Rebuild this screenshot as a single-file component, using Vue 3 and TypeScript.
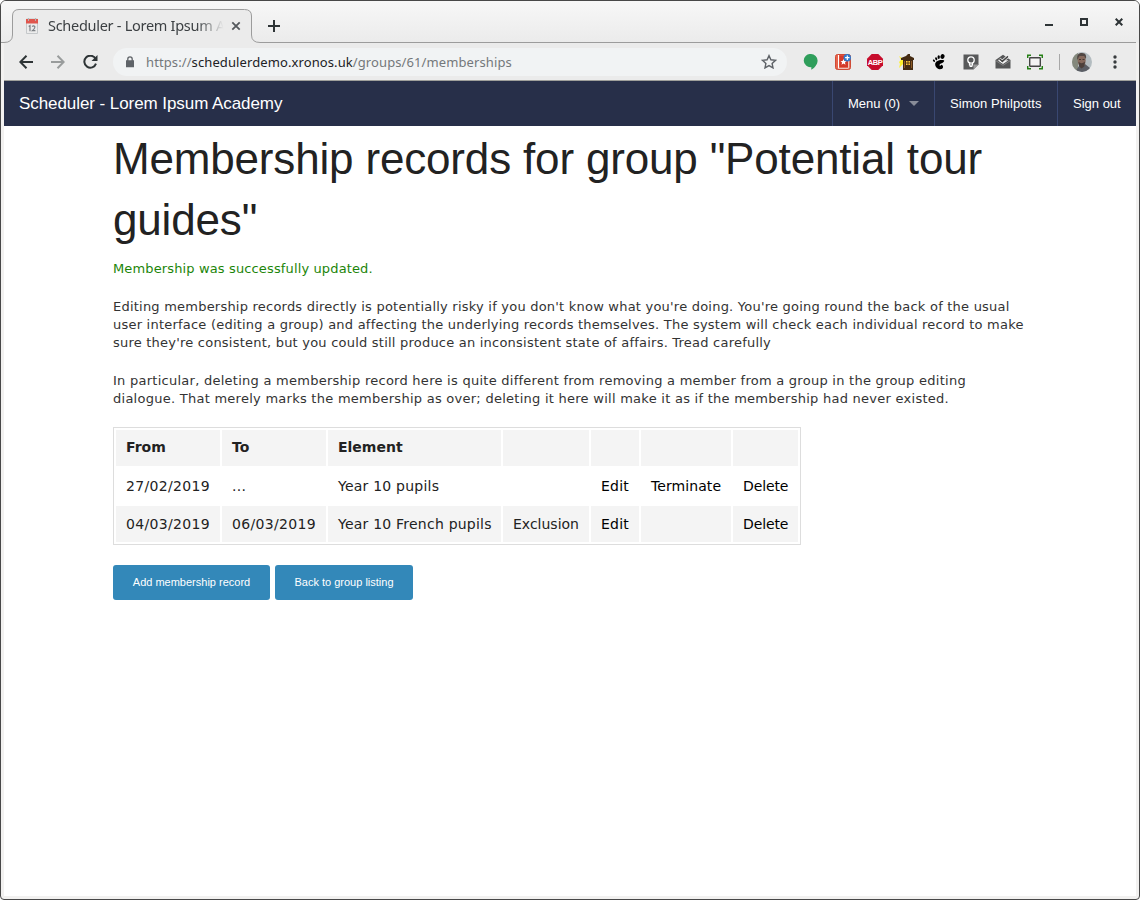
<script setup lang="ts">
interface MembershipRow {
  from: string
  to: string
  element: string
  kind: string
  terminable: boolean
}

const rows: MembershipRow[] = [
  { from: '27/02/2019', to: '...', element: 'Year 10 pupils', kind: '', terminable: true },
  { from: '04/03/2019', to: '06/03/2019', element: 'Year 10 French pupils', kind: 'Exclusion', terminable: false },
]
</script>

<template>
  <div class="window">
    <header class="tabstrip">
      <svg class="tab-shape" width="1138" height="42" viewBox="1 1 1138 42">
        <path d="M1 42.5H4Q12.500 42.500 12.500 35V16Q12.500 9.500 19 9.500H244.500Q251.500 9.500 251.500 16V35Q251.500 42.500 260 42.500H1139V44H1Z" fill="#ebebeb" />
        <path d="M260 42.500H1139V1H1V42.500H4Q12.500 42.500 12.500 35V16Q12.500 9.500 19 9.500H244.500Q251.500 9.500 251.500 16V35Q251.500 42.500 260 42.500Z" fill="url(#strip)" stroke="none" />
        <path d="M1 42.500H4Q12.500 42.500 12.500 35V16Q12.500 9.500 19 9.500H244.500Q251.500 9.500 251.500 16V35Q251.500 42.500 260 42.500H1136" fill="none" stroke="#9c9c9c" />
        <defs>
          <linearGradient id="strip" x1="0" y1="0" x2="0" y2="1"><stop stop-color="#f7f7f7" /><stop offset="1" stop-color="#ebebeb" /></linearGradient>
        </defs>
      </svg>
      <div class="tab">
        <svg class="favicon" width="12" height="16" viewBox="0 0 12 16">
          <path d="M.5 1h11v14.500H.5z" fill="#ececec" stroke="#c5c8ca" />
          <path d="M0 1h12v4.500H0z" fill="#e0564d" />
          <path d="M2.500 0v3M9.500 0v3" stroke="#b5b5b5" />
          <path d="M2.700 8.500l1.300-.9V13.200M6.200 8.700q1.200-1.600 2.500-.3 .8 1.500-2.300 4.300h3" fill="none" stroke="#7d8185" stroke-width="1.200" />
        </svg>
        <span class="tab-title">Scheduler - Lorem Ipsum A</span>
        <svg class="tab-close" width="10" height="10" viewBox="0 0 10 10"><path d="M1.300 1.300l7.400 7.400M8.700 1.300L1.300 8.700" stroke="#54585c" stroke-width="1.800" /></svg>
      </div>
      <svg class="new-tab" width="12" height="12" viewBox="0 0 12 12"><path d="M6 0v12M0 6h12" stroke="#2e3436" stroke-width="2" /></svg>
      <div class="controls">
        <svg width="8" height="8" viewBox="0 0 8 8"><path d="M0 7h8" stroke="#2e3436" stroke-width="2" /></svg>
        <svg width="8" height="8" viewBox="0 0 8 8"><path d="M1 1h6v6H1z" fill="none" stroke="#2e3436" stroke-width="2" /></svg>
        <svg width="8" height="8" viewBox="0 0 8 8"><path d="M.7.7l6.600 6.600M7.300.7L.7 7.300" stroke="#2e3436" stroke-width="2" /></svg>
      </div>
    </header>

    <div class="toolbar">
      <svg class="nav" width="14" height="14" viewBox="0 0 14 14"><path d="M14 7H1.500M7.500.8L1.300 7l6.200 6.200" fill="none" stroke="#2e3436" stroke-width="2" /></svg>
      <svg class="nav" width="14" height="14" viewBox="0 0 14 14"><path d="M0 7h12.500M6.500.8L12.700 7l-6.200 6.200" fill="none" stroke="#999c9c" stroke-width="2" /></svg>
      <svg class="nav reload" width="15" height="14" viewBox="0 0 15 14"><path d="M12.600 3.800A6 6 0 1 0 13 8.700" fill="none" stroke="#2e3436" stroke-width="2" /><path d="M14.500 0v6H8.500z" fill="#2e3436" /></svg>
      <div class="omnibox">
        <svg width="8" height="12" viewBox="0 0 8 12"><path d="M0 4.300h8v7H0z" fill="#5f6368" /><path d="M1.800 5V3.100a2.200 2.200 0 0 1 4.400 0V5" fill="none" stroke="#5f6368" stroke-width="1.300" /></svg>
        <span class="url">https://<b>schedulerdemo.xronos.uk</b>/groups/61/memberships</span>
        <svg class="star" width="16" height="15" viewBox="0 0 16 15"><path d="M8 1.600l1.900 4.200 4.600.5-3.400 3.100.9 4.500-4-2.300-4 2.300.9-4.500L1.500 6.300l4.600-.5z" fill="none" stroke="#5f6368" stroke-width="1.400" /></svg>
      </div>
      <div class="extensions">
        <svg viewBox="0 0 16 16"><path d="M8 0a6.600 6.600 0 0 1 6.600 6.500c0 4-3.300 7.700-6.300 9.200v-2.600A6.600 6.600 0 1 1 8 0z" fill="#2f9e5b" /></svg>
        <svg viewBox="0 0 16 16"><rect x=".5" y=".5" width="15" height="15" rx="2" fill="#e8644c" stroke="#cf4b36" /><path d="M3.500 1v13" stroke="#fff" stroke-width="1" /><rect x="4.500" y="1.500" width="8.500" height="12" fill="#d43a2a" /><path d="M3 14.300h10.500M13.700 7v7" stroke="#f3d9d3" /><path d="M8.500 5l.9 2 2.200.2-1.700 1.400.6 2.200-2-1.200-2 1.200.6-2.200L5.400 7.200 7.600 7z" fill="#fff" /><circle cx="12.300" cy="3.700" r="3.700" fill="#3179cc" /><path d="M12.300 1.500v4.400M10.100 3.700h4.400" stroke="#fff" stroke-width="1.200" /></svg>
        <svg class="abp-icon" viewBox="0 0 16 16"><path d="M4.700 0h6.600L16 4.700v6.600L11.300 16H4.700L0 11.300V4.700z" fill="#c70d2c" /><text x="8" y="10.900" text-anchor="middle" class="abp">ABP</text></svg>
        <svg viewBox="0 0 16 16"><path d="M0 2l7 5-7 7 1-4-1-2 2-2z" fill="#fff02c" /><path d="M9 0h2v2l4 2v2H2V4l5-2zM4 6h10v10H4z" fill="#452c13" /><path d="M5 7h1v7H5zM12 7h1v7h-1z" fill="#8c5a27" /><path d="M7 7h4v4H7z" fill="#ffc63a" /><path d="M9 7v4M7 9h4" stroke="#452c13" stroke-width=".8" /></svg>
        <svg viewBox="0 0 16 16"><ellipse cx="11.500" cy="2.500" rx="2" ry="2.500" transform="rotate(20 11.500 2.500)" /><ellipse cx="7.700" cy="3.100" rx="1.200" ry="1.900" /><ellipse cx="5.200" cy="4.700" rx="1" ry="1.600" transform="rotate(-20 5.200 4.700)" /><ellipse cx="3" cy="6.700" rx=".9" ry="1.400" transform="rotate(-35 3 6.700)" /><path d="M12.800 6.200c-4-.8-9 .8-8.600 4.500.3 3 3.500 5.100 6.200 4.400 2.200-.7 2-3.300.7-4.100-1.200-.7-1 .9-2 .8-1.200-.3-.5-1.800.9-2.300 1.700-.6 4.200-2.500 2.800-3.300z" /></svg>
        <svg viewBox="0 0 16 16"><path d="M.5 .5h15v10L10.500 15.500H.5z" fill="#58595a" /><path d="M15.500 10.500l-5 5v-5z" fill="#999" /><circle cx="8" cy="6" r="3.200" fill="none" stroke="#fff" stroke-width="1.300" /><path d="M6.500 8.500v2.700h3V8.500M6.600 12.500h2.800" fill="none" stroke="#fff" stroke-width="1.200" /></svg>
        <svg viewBox="0 0 16 16"><path d="M.5 6L8 .8 15.500 6v8.500H.5z" fill="#555657" /><path d="M2.500 6.300h11L8 10z" fill="#f1f1f1" /><path d="M4.500 4.700l2.800 2.700 5.700-5" fill="none" stroke="#fff" stroke-width="2.800" /><path d="M4.500 4.700l2.800 2.700 5.700-5" fill="none" stroke="#444" stroke-width="1.500" /><path d="M.5 6.500L8 11.300l7.500-4.800" fill="none" stroke="#999" stroke-width=".7" /></svg>
        <svg viewBox="0 0 16 16"><rect x="2.700" y="3.700" width="10.600" height="8.600" rx=".6" fill="#f4f4f4" stroke="#454545" stroke-width="1.400" /><path d="M.7 4V1.200H4M12 1.200h3.300V4M.7 12v2.800H4M12 14.800h3.300V12" fill="none" stroke="#258015" stroke-width="1.500" /></svg>
      </div>
      <span class="separator" />
      <svg class="avatar" width="20" height="20" viewBox="0 0 20 20">
        <defs><clipPath id="face"><circle cx="10" cy="10" r="10" /></clipPath></defs>
        <g clip-path="url(#face)"><path d="M0 0h20v20H0z" fill="#b3bcc0" /><path d="M0 0h6v20H0z" fill="#85897d" /><path d="M3 20l4-6 6-2 5 4v4z" fill="#5b5e65" /><ellipse cx="9.700" cy="8.500" rx="4" ry="6.200" fill="#86695c" /><path d="M5.300 8C4.500 2 7 1 10 1c4 0 4.500 3 4 6l-2-3H7.500z" fill="#514743" /><path d="M6.500 10q3.500 2.500 6.500-.5l-.7 5-2.800 2-2.300-2z" fill="#4d403b" /><path d="M7 7.500h2M10.500 7.500h2" stroke="#443730" /></g>
      </svg>
      <svg class="more" width="4" height="14" viewBox="0 0 4 14"><circle cx="2" cy="2" r="1.700" /><circle cx="2" cy="7" r="1.700" /><circle cx="2" cy="12" r="1.700" /></svg>
    </div>

    <div class="viewport">
      <nav class="topbar">
        <span class="brand">Scheduler - Lorem Ipsum Academy</span>
        <a class="menu">Menu (0)<i /></a>
        <a class="user">Simon Philpotts</a>
        <a class="signout">Sign out</a>
      </nav>
      <main>
        <h1>Membership records for group "Potential tour<br>guides"</h1>
        <p class="notice">Membership was successfully updated.</p>
        <p>Editing membership records directly is potentially risky if you don't know what you're doing. You're going round the back of the usual<br>user interface (editing a group) and affecting the underlying records themselves. The system will check each individual record to make<br>sure they're consistent, but you could still produce an inconsistent state of affairs. Tread carefully</p>
        <p class="caution">In particular, deleting a membership record here is quite different from removing a member from a group in the group editing<br>dialogue. That merely marks the membership as over; deleting it here will make it as if the membership had never existed.</p>
        <table>
          <colgroup><col class="c1"><col class="c2"><col class="c3"><col class="c4"><col class="c5"><col class="c6"><col class="c7"></colgroup>
          <thead>
            <tr><th>From</th><th>To</th><th>Element</th><th /><th /><th /><th /></tr>
          </thead>
          <tbody>
            <tr v-for="row in rows" :key="row.from">
              <td class="date">{{ row.from }}</td>
              <td class="date">{{ row.to }}</td>
              <td class="element">{{ row.element }}</td>
              <td>{{ row.kind }}</td>
              <td><a class="edit">Edit</a></td>
              <td><a v-if="row.terminable" class="terminate">Terminate</a></td>
              <td><a class="delete">Delete</a></td>
            </tr>
          </tbody>
        </table>
        <div class="actions">
          <button class="add">Add membership record</button>
          <button class="back">Back to group listing</button>
        </div>
      </main>
    </div>
  </div>
</template>

<style>
body { margin: 0; background: #fff; }
</style>

<style scoped>
* { box-sizing: border-box; }
svg { display: block; flex: none; }
.window { width: 1140px; height: 900px; border: 1px solid #484848; border-radius: 6px 6px 4px 4px; background: #f2f1f0; overflow: hidden; display: flex; flex-direction: column; }
.tabstrip { position: relative; height: 42px; flex: none; display: flex; }
.tab-shape { position: absolute; left: 0; top: 0; }
.tab { position: relative; margin-left: 11px; width: 240px; height: 33px; margin-top: 8px; display: flex; align-items: center; padding-left: 14px; }
.favicon { margin-top: 1px; }
.tab-title { margin: -2px 0 0 10px; width: 181px; flex: none; white-space: nowrap; font: 14.500px/22px "Noto Sans", sans-serif; letter-spacing: -0.28px; color: #3c4043; -webkit-mask-image: linear-gradient(90deg, #000 82%, transparent 97%); mask-image: linear-gradient(90deg, #000 82%, transparent 97%); }
.tab-close { margin-left: 2px; }
.new-tab { position: relative; margin: 19px 0 0 16px; }
.controls { position: relative; margin: 17px 11px 0 auto; display: flex; gap: 27px; padding-right: 5px; }
.toolbar { height: 38px; flex: none; margin-right: 3px; margin-left: 3px; background: #ebebeb; border-bottom: 1px solid #9fa09b; display: flex; align-items: center; padding: 0 19px 0 15px; }
.nav { margin-right: 18px; }
.omnibox { height: 28px; width: 674px; margin-left: -3px; border-radius: 14px; background: #f1f3f4; display: flex; align-items: center; padding: 0 10px 0 13px; }
.url { margin-left: 12px; font: 13px/20px "Noto Sans", sans-serif; letter-spacing: 0.100px; color: #74787b; white-space: nowrap; }
.url b { font-weight: 400; color: #202124; }
.star { margin-left: auto; }
.extensions { display: flex; gap: 16px; margin-left: 16px; }
.extensions svg { width: 16px; height: 16px; }
.extensions .abp-icon { overflow: visible; }
.abp { font: bold 7.500px "Liberation Sans", sans-serif; letter-spacing: -0.400px; fill: #fff; }
.separator { width: 1px; height: 16px; margin-left: 16px; background: #a8a8a8; }
.avatar { margin-left: 12px; }
.more { margin-left: auto; fill: #383c3e; }
.viewport { margin: 0 3px 3px; flex: 1; background: #fff; }
.topbar { height: 45px; background: #272f49; color: #fff; display: flex; align-items: center; font: 13px/45px "Liberation Sans", sans-serif; }
.brand { font-size: 17px; letter-spacing: -0.070px; margin-left: 15px; margin-right: auto; }
.topbar a { height: 45px; border-left: 1px solid #394771; padding-left: 15px; white-space: nowrap; }
.menu { width: 102px; display: flex; align-items: center; }
.menu i { border: 5px solid transparent; border-top-color: #888c98; border-bottom: 0; margin-left: 9px; }
.user { width: 123px; letter-spacing: 0.080px; }
.signout { width: 79px; }
main { padding: 2px 0 0 109px; }
h1 { margin: 0 0 10px; font: 400 44px/61px "Liberation Sans", sans-serif; letter-spacing: -0.170px; color: #222; white-space: nowrap; }
p { margin: 0 0 20px; font: 13px/18px "DejaVu Sans", sans-serif; letter-spacing: 0.220px; color: #333; white-space: nowrap; }
.notice { color: #1c8509; letter-spacing: 0.135px; }
.caution { letter-spacing: 0.260px; margin-bottom: 19px; }
table { width: 688px; table-layout: fixed; border: 1px solid #ddd; border-collapse: separate; border-spacing: 2px; font: 14px/18px "DejaVu Sans", sans-serif; color: #222; margin-bottom: 20px; }
.c1 { width: 104px; } .c2 { width: 104px; } .c3 { width: 173px; } .c4 { width: 86px; } .c5 { width: 48px; } .c6 { width: 90px; } .c7 { width: 65px; }
th, td { height: 36px; padding: 0 0 0 10px; text-align: left; white-space: nowrap; vertical-align: middle; }
th { padding-bottom: 2px; }
th, tbody tr:nth-child(even) td { background: #f4f4f4; }
td a { color: #000; }
.date { letter-spacing: 0.330px; }
.element { letter-spacing: 0.220px; }
.edit { letter-spacing: 0.250px; }
.terminate { letter-spacing: 0.080px; }
.delete { letter-spacing: -0.120px; }
.actions { display: flex; gap: 5px; }
button { height: 35px; padding: 0 0 2px; border: 0; border-radius: 3px; background: #3388b9; color: #fff; font: 11px "Liberation Sans", sans-serif; }
.add { width: 157px; }
.back { width: 138px; }
</style>
